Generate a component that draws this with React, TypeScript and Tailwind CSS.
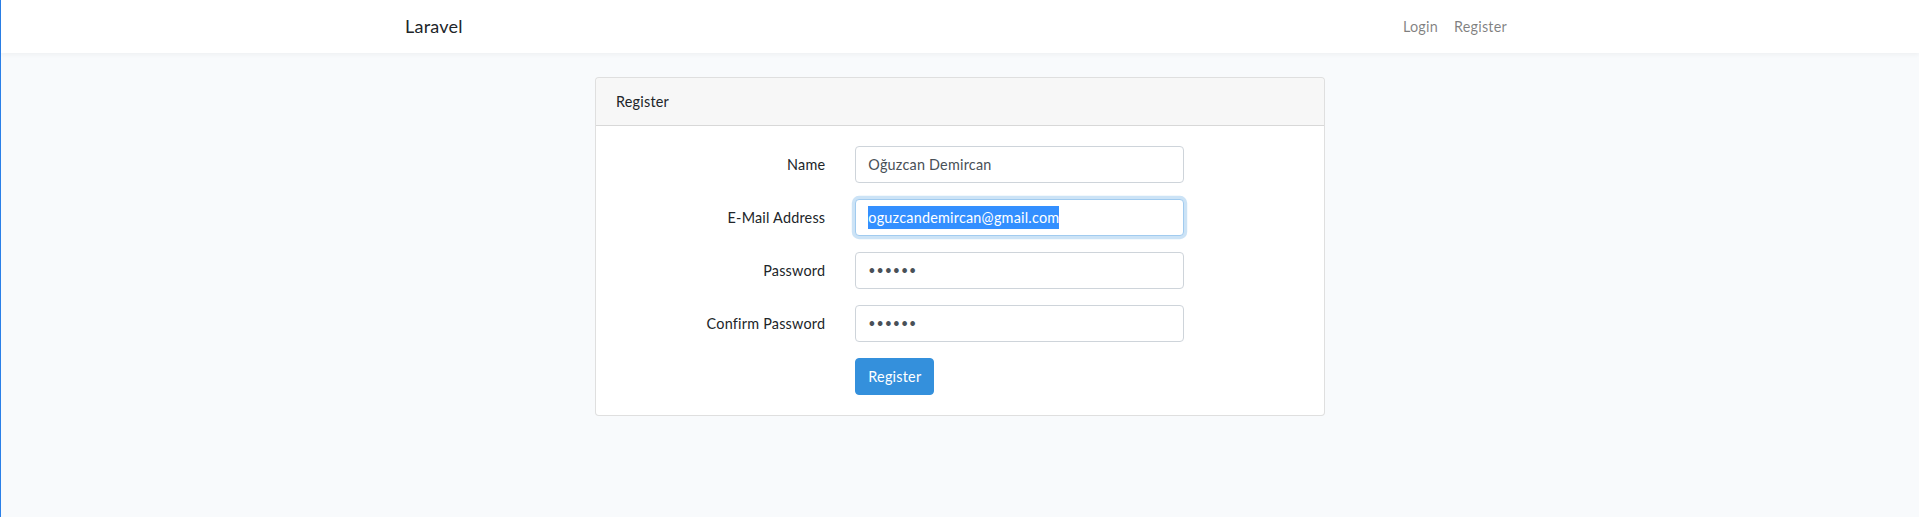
import React from "react";

const font = { fontFamily: "Lato, 'Noto Sans', sans-serif", letterSpacing: "0.22px" };

function Row({ label, children, last }: { label: string; children: React.ReactNode; last?: boolean }) {
  return (
    <div className={`flex ${last ? "" : "mb-4"}`}>
      <label className="w-[209.33px] shrink-0 pt-[7px] text-right text-[14.4px] leading-[1.6] text-[#212529]">
        {label}
      </label>
      <div className="ml-[30px] w-[329px]">{children}</div>
    </div>
  );
}

function PasswordBox() {
  return (
    <div className="flex h-[37px] w-full items-center rounded border border-[#ced4da] bg-white px-3 text-[12.5px] leading-[1.6] tracking-[0.9px] text-[#495057]">
      ••••••
    </div>
  );
}

export default function App() {
  return (
    <div
      className="min-h-screen w-full bg-[#f8fafc] border-l border-[#2a7fe8] text-[#212529]"
      style={font}
    >
      <nav className="h-[53px] bg-white shadow-[0_2px_4px_rgba(0,0,0,0.04)]">
        <div className="mx-auto flex h-full max-w-[1140px] items-center justify-between px-[15px]">
          <a className="text-[18px] leading-[1.6] text-[#212529]">Laravel</a>
          <div className="flex">
            <a className="px-2 text-[14.4px] leading-[1.6] text-[rgba(0,0,0,0.5)]">Login</a>
            <a className="px-2 text-[14.4px] leading-[1.6] text-[rgba(0,0,0,0.5)]">Register</a>
          </div>
        </div>
      </nav>
      <main className="py-6">
        <div className="mx-auto w-[730px] rounded border border-[rgba(0,0,0,0.125)] bg-white">
          <div className="rounded-t border-b border-[rgba(0,0,0,0.125)] bg-[rgba(0,0,0,0.03)] px-5 py-3 text-[14.4px] leading-[1.6]">
            Register
          </div>
          <div className="p-5">
            <Row label="Name">
              <input
                type="text"
                defaultValue="Oğuzcan Demircan"
                className="block h-[37px] w-full rounded border border-[#ced4da] bg-white px-3 text-[14.4px] leading-[1.6] text-[#495057] outline-none"
                style={font}
              />
            </Row>
            <Row label="E-Mail Address">
              <div className="flex h-[37px] w-full items-center rounded border border-[#a1cbef] bg-white px-3 text-[14.4px] leading-[1.6] text-[#495057] shadow-[0_0_0_3.2px_rgba(52,144,220,0.25)]">
                <span className="bg-[#338fff] text-white">oguzcandemircan@gmail.com</span>
              </div>
            </Row>
            <Row label="Password">
              <PasswordBox />
            </Row>
            <Row label="Confirm Password">
              <PasswordBox />
            </Row>
            <Row label="" last>
              <button
                type="button"
                className="h-[37px] rounded border border-[#3490dc] bg-[#3490dc] px-3 text-[14.4px] leading-[1.6] text-white"
                style={font}
              >
                Register
              </button>
            </Row>
          </div>
        </div>
      </main>
    </div>
  );
}
